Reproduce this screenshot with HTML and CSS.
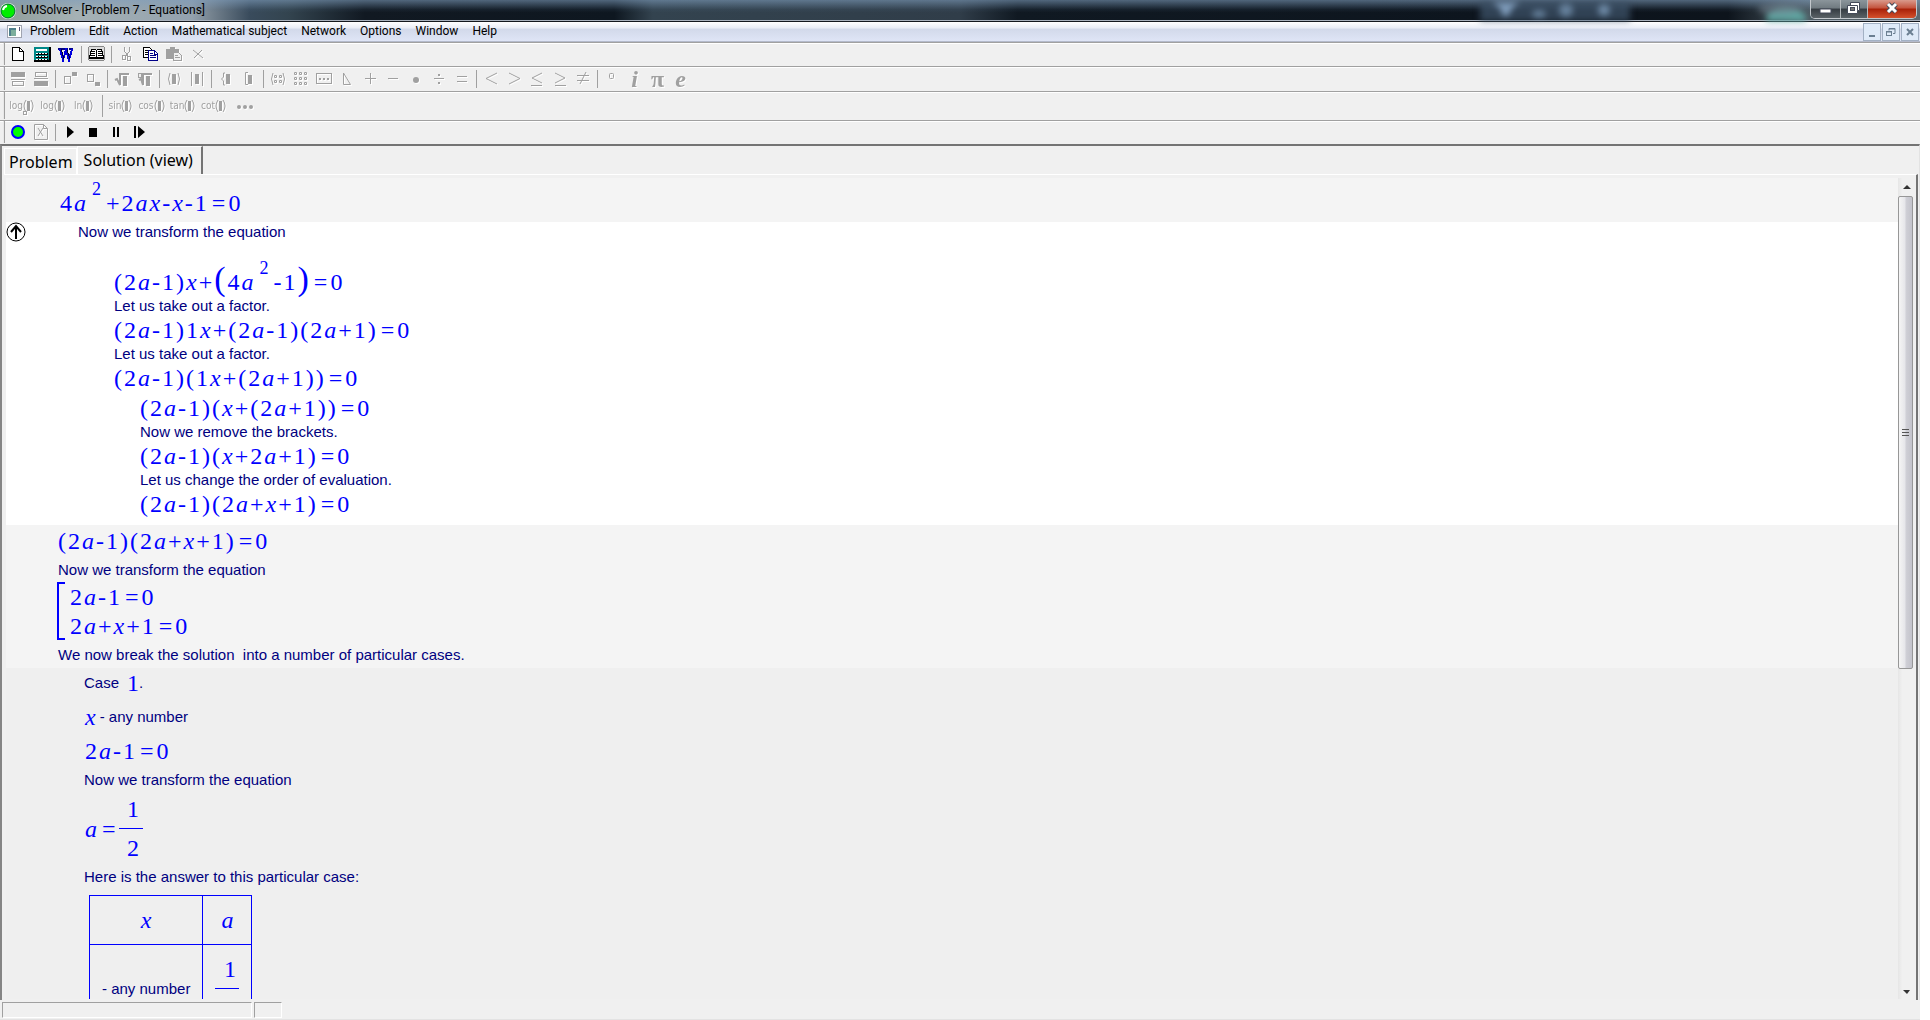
FILE: index.html
```
<!DOCTYPE html>
<html lang="en">
<head>
    <meta charset="UTF-8">
    <meta name="viewport" content="width=device-width, initial-scale=1.0">
    <title>UMSolver - [Problem 7 - Equations]</title>
    <link rel="stylesheet" href="styles.css">
</head>
<body>
    <div class="window">
        <header class="titlebar">
            <svg class="app_icon" width="18" height="18" viewBox="0 0 18 18"><circle cx="8" cy="9" r="8" fill="#e8ffe8"/><circle cx="8" cy="9" r="7" fill="#0e0" stroke="#063" stroke-width="1"/><path d="M3 8a5 5 0 0 1 4-4" stroke="#fff" stroke-width="2" fill="none"/></svg>
            <h1 class="title">UMSolver - [Problem 7 - Equations]</h1>
            <svg class="glass" width="330" height="21" viewBox="0 0 330 21">
                <rect x="0" y="2" width="150" height="19" fill="#40566c" opacity=".7"/>
                <path d="M12 2h28l-7 5-5 9h-5l-3-8z" fill="#7f9cbb"/>
                <ellipse cx="59" cy="14" rx="7" ry="4" fill="#65809b"/><ellipse cx="86" cy="10" rx="7" ry="7" fill="#65809b"/><ellipse cx="124" cy="10" rx="6" ry="6" fill="#6e8aa6"/>
                <ellipse cx="306" cy="19" rx="20" ry="11" fill="#5fa9a4"/><ellipse cx="300" cy="9" rx="22" ry="6" fill="#71808e" opacity=".6"/>
            </svg>
            <div class="window_buttons">
                <button class="win_btn" aria-label="Minimize"><svg width="29" height="18"><rect x="9" y="9" width="11" height="4" fill="#fff" stroke="#444b5a"/></svg></button>
                <button class="win_btn restore" aria-label="Restore"><svg width="26" height="18"><path d="M9.500 2.500h9v8h-2v3h-10v-8h3z" fill="#fff" stroke="#444b5a"/><path d="M9 5.500h7.500v5" fill="none" stroke="#444b5a"/><rect x="9.500" y="7.500" width="4" height="3" fill="#777" stroke="#444b5a"/></svg></button>
                <button class="win_btn close" aria-label="Close"><svg width="48" height="18"><path d="M20 4l8 8M28 4l-8 8" stroke="#444b5a" stroke-width="5"/><path d="M20 4l8 8M28 4l-8 8" stroke="#fff" stroke-width="3"/></svg></button>
            </div>
        </header>

        <nav class="menubar">
            <svg class="doc_icon" width="15" height="13" shape-rendering="crispEdges"><rect width="15" height="13" fill="#a0a4b0"/><rect x="1" y="1" width="13" height="11" fill="#fff"/><rect x="2" y="3" width="7" height="8" fill="#4d7f8c"/><rect x="4" y="5" width="5" height="6" fill="#7cae9c"/><rect x="12" y="2" width="1" height="4" fill="#557"/></svg>
            <button>Problem</button>
            <button>Edit</button>
            <button>Action</button>
            <button>Mathematical subject</button>
            <button>Network</button>
            <button>Options</button>
            <button>Window</button>
            <button>Help</button>
            <div class="mdi_buttons">
                <button class="mdi" aria-label="Minimize document"><svg width="16" height="16"><path d="M5 12h6" stroke="#6b7f92" stroke-width="2"/></svg></button>
                <button class="mdi" aria-label="Restore document"><svg width="16" height="16" fill="none" stroke="#6b7f92"><path d="M6 6.500V4.500h6v5h-2M6 5h6M4 8h5"/><rect x="3.500" y="7.500" width="5" height="4"/></svg></button>
                <button class="mdi" aria-label="Close document"><svg width="16" height="16"><path d="M5 5l6 6M11 5l-6 6" stroke="#6b7f92" stroke-width="2"/></svg></button>
            </div>
        </nav>

        <div class="toolbar main_tools">
            <button class="tool" aria-label="New"><svg width="18" height="16" shape-rendering="crispEdges"><path d="M3.500 1.500h7l4 4v9h-11z" fill="#fff" stroke="#000"/><path d="M10.500 1.500v4h4" fill="none" stroke="#000"/></svg></button>
            <button class="tool" aria-label="Calculator"><svg width="18" height="16" shape-rendering="crispEdges"><rect x="1" y="1" width="17" height="15" fill="#000"/><rect x="1" y="1" width="15" height="13" fill="#088"/><rect x="3" y="3" width="11" height="2" fill="#fff"/><path d="M3 8h12M3 11h12M3 14h12" stroke="#000" stroke-width="2"/><path d="M3 7.500h12M3 10.500h12M3 13.500h12" stroke="#fff" stroke-dasharray="2 1"/></svg></button>
            <button class="tool" aria-label="Word"><svg width="18" height="16" shape-rendering="crispEdges"><path d="M1 3h6M7 3h4M12 3h4" stroke="#008" stroke-width="2"/><path d="M3 3l3 11 3-10 3 10 3-11" fill="none" stroke="#00d" stroke-width="2"/><path d="M4 3l3 10M10 4l3 9" stroke="#003" stroke-width="1"/></svg></button>
            <span class="sep"></span>
            <button class="tool" aria-label="Handbook"><svg width="18" height="16" shape-rendering="crispEdges"><rect x="1.500" y=".5" width="16" height="14" rx="2" fill="#ddd" stroke="#888"/><path d="M4.500 3.500h4l1 1 1-1h4l2 8h-5l-2 1-2-1h-5z" fill="#fff" stroke="#000"/><path d="M5 5.500h3M11 5.500h3M4 7.500h4M11 7.500h4M4 9.500h4M11 9.500h4M9.500 4v9M2 12.500h15" stroke="#000"/></svg></button>
            <span class="sep"></span>
            <button class="tool" disabled aria-label="Cut"><svg width="18" height="16" shape-rendering="crispEdges" fill="none" stroke="#a0a0a0"><path d="M7.500 1v4l4 6M12.500 1v4l-4 6"/><rect x="5.500" y="9.500" width="3" height="4"/><rect x="10.500" y="10.500" width="3" height="4"/></svg></button>
            <button class="tool" aria-label="Copy"><svg width="18" height="16" shape-rendering="crispEdges" fill="#fff"><path d="M2.500 1.500h6l2 2v8h-8z" stroke="#000"/><path d="M4 4.500h3M4 6.500h5M4 8.500h5" stroke="#000"/><path d="M7.500 4.500h6l3 3v7h-9z" stroke="#008"/><path d="M9 7.500h3M9 9.500h6M9 11.500h6M13.500 5v3h3" stroke="#008"/></svg></button>
            <button class="tool" disabled aria-label="Paste"><svg width="18" height="16" shape-rendering="crispEdges"><path d="M1 3h4v-2h5v2h4v10h-13z" fill="#a0a0a0"/><path d="M8.500 6.500h5l3 3v5h-8z" fill="#f0f0f0" stroke="#a0a0a0"/><path d="M10 9.500h3M10 11.500h5M4 4.500h7" stroke="#a0a0a0"/></svg></button>
            <button class="tool" disabled aria-label="Delete"><svg width="18" height="16" stroke="#a0a0a0"><path d="M4 4l10 8M13 4l-8 8" stroke-width="1"/></svg></button>
        </div>

        <div class="toolbar formula_tools">
            <button class="tool" disabled aria-label="Fraction top"><svg width="16" height="16"><path d="M1 1h14v5H1zM1 8h14v1H1z" fill="#a0a0a0"/><rect x="2.500" y="10.500" width="11" height="4" fill="none" stroke="#a0a0a0"/></svg></button>
            <button class="tool" disabled aria-label="Fraction bottom"><svg width="16" height="16"><path d="M1 10h14v5H1zM1 7h14v1H1z" fill="#a0a0a0"/><rect x="2.500" y="1.500" width="11" height="4" fill="none" stroke="#a0a0a0"/></svg></button>
            <span class="sep"></span>
            <button class="tool" disabled aria-label="Power"><svg width="16" height="16"><rect x="2.500" y="5.500" width="6" height="7" fill="none" stroke="#a0a0a0"/><rect x="10" y="1" width="5" height="4" fill="#a0a0a0"/></svg></button>
            <button class="tool" disabled aria-label="Index"><svg width="16" height="16"><rect x="2.500" y="3.500" width="6" height="7" fill="none" stroke="#a0a0a0"/><rect x="10" y="11" width="5" height="4" fill="#a0a0a0"/></svg></button>
            <span class="sep"></span>
            <button class="tool" disabled aria-label="Square root"><svg width="16" height="16"><path d="M1 9l2-1 3 6V3h9" fill="none" stroke="#a0a0a0" stroke-width="2"/><rect x="9" y="5" width="4" height="10" fill="#a0a0a0"/></svg></button>
            <button class="tool" disabled aria-label="Nth root"><svg width="16" height="16"><path d="M2 9l2-1 2 6V3h9" fill="none" stroke="#a0a0a0" stroke-width="2"/><rect x="9" y="5" width="4" height="10" fill="#a0a0a0"/><rect x="1.500" y="2.500" width="3" height="4" fill="#eee" stroke="#a0a0a0"/></svg></button>
            <span class="sep"></span>
            <button class="tool" disabled aria-label="Brackets"><svg width="16" height="16"><path d="M4 2Q1 8 4 14M12 2q3 6 0 12" fill="none" stroke="#a0a0a0"/><rect x="6" y="3" width="4" height="10" fill="#a0a0a0"/></svg></button>
            <button class="tool" disabled aria-label="Modulus"><svg width="16" height="16"><path d="M2.500 1v14M13.500 1v14" fill="none" stroke="#a0a0a0"/><rect x="6" y="3" width="4" height="10" fill="#a0a0a0"/></svg></button>
            <span class="sep"></span>
            <button class="tool" disabled aria-label="System"><svg width="16" height="16"><path d="M7 2H5.500v4l-2 2 2 2v4H7" fill="none" stroke="#a0a0a0"/><rect x="8" y="3" width="4" height="10" fill="#a0a0a0"/></svg></button>
            <button class="tool" disabled aria-label="Set"><svg width="16" height="16"><path d="M7 1.500H4.500v12H7" fill="none" stroke="#a0a0a0"/><rect x="7" y="4" width="4" height="9" fill="#a0a0a0"/></svg></button>
            <span class="sep"></span>
            <button class="tool" disabled aria-label="Matrix"><svg width="16" height="16" fill="none" stroke="#a0a0a0"><path d="M3 2Q0 8 3 14M13 2q3 6 0 12M4.500 4.500h2v2h-2zM9.500 4.500h2v2h-2zM4.500 9.500h2v2h-2zM9.500 9.500h2v2h-2z"/></svg></button>
            <button class="tool" disabled aria-label="Table"><svg width="16" height="16" fill="none" stroke="#a0a0a0"><path d="M1.500 1.500h2v2h-2zM6.500 1.500h2v2h-2zM11.500 1.500h2v2h-2zM1.500 6.500h2v2h-2zM6.500 6.500h2v2h-2zM11.500 6.500h2v2h-2zM1.500 11.500h2v2h-2zM6.500 11.500h2v2h-2zM11.500 11.500h2v2h-2z"/></svg></button>
            <button class="tool" disabled aria-label="Text"><svg width="16" height="16"><rect x=".5" y="2.500" width="15" height="10" fill="none" stroke="#a0a0a0"/><path d="M3 7h2v2H3zM7 7h2v2H7zM11 7h2v2h-2z" fill="#a0a0a0"/></svg></button>
            <button class="tool" disabled aria-label="Triangle"><svg width="16" height="16"><path d="M4.500 2v11.500h7z" fill="none" stroke="#a0a0a0"/></svg></button>
            <button class="tool" disabled aria-label="Plus"><svg width="16" height="16"><path d="M3 7.500h11M8.500 2v11" stroke="#a0a0a0"/></svg></button>
            <button class="tool" disabled aria-label="Minus"><svg width="16" height="16"><path d="M3 7.500h10" stroke="#a0a0a0"/></svg></button>
            <button class="tool" disabled aria-label="Multiply"><svg width="16" height="16"><circle cx="8" cy="9" r="3" fill="#a0a0a0"/></svg></button>
            <button class="tool" disabled aria-label="Divide"><svg width="16" height="16" fill="#a0a0a0"><path d="M3 7h10v1H3zM7 3h2v2H7zM7 11h2v2H7z"/></svg></button>
            <button class="tool" disabled aria-label="Equals"><svg width="16" height="16"><path d="M3 5.500h10M3 10.500h10" stroke="#a0a0a0"/></svg></button>
            <span class="sep"></span>
            <button class="tool" disabled aria-label="Less"><svg width="16" height="16" fill="none" stroke="#a0a0a0"><path d="M14 2L3 7.500 14 13"/></svg></button>
            <button class="tool" disabled aria-label="Greater"><svg width="16" height="16" fill="none" stroke="#a0a0a0"><path d="M3 2l11 5.500L3 13"/></svg></button>
            <button class="tool" disabled aria-label="Less or equal"><svg width="16" height="16" fill="none" stroke="#a0a0a0"><path d="M13 2L3 7l10 5M2 14.500h11"/></svg></button>
            <button class="tool" disabled aria-label="Greater or equal"><svg width="16" height="16" fill="none" stroke="#a0a0a0"><path d="M3 2l10 5-10 5M3 14.500h11"/></svg></button>
            <button class="tool" disabled aria-label="Not equal"><svg width="16" height="16" fill="none" stroke="#a0a0a0"><path d="M2 4.500h12M2 9.500h12M11 1L5 13"/></svg></button>
            <span class="sep"></span>
            <button class="tool" disabled aria-label="Degree"><svg width="16" height="16"><rect x="5.500" y="2.500" width="4" height="5" rx="1" fill="none" stroke="#a0a0a0"/></svg></button>
            <button class="tool letter" disabled><i>i</i></button>
            <button class="tool letter" disabled>π</button>
            <button class="tool letter" disabled><i>e</i></button>
        </div>

        <div class="toolbar function_tools">
            <button class="tool" disabled>log<svg width="11" height="18"><path d="M3 3Q-1 9 3 15M8 3q4 6 0 12" fill="none" stroke="#a0a0a0"/><rect x="4" y="4" width="3" height="10" fill="#a0a0a0"/><rect x=".5" y="14.500" width="3" height="3" fill="none" stroke="#a0a0a0"/></svg></button>
            <button class="tool" disabled>log<svg width="11" height="18"><path d="M3 3Q-1 9 3 15M8 3q4 6 0 12" fill="none" stroke="#a0a0a0"/><rect x="4" y="4" width="3" height="10" fill="#a0a0a0"/></svg></button>
            <button class="tool" disabled>ln<svg width="11" height="18"><path d="M3 3Q-1 9 3 15M8 3q4 6 0 12" fill="none" stroke="#a0a0a0"/><rect x="4" y="4" width="3" height="10" fill="#a0a0a0"/></svg></button>
            <span class="sep"></span>
            <button class="tool" disabled>sin<svg width="11" height="18"><path d="M3 3Q-1 9 3 15M8 3q4 6 0 12" fill="none" stroke="#a0a0a0"/><rect x="4" y="4" width="3" height="10" fill="#a0a0a0"/></svg></button>
            <button class="tool" disabled>cos<svg width="11" height="18"><path d="M3 3Q-1 9 3 15M8 3q4 6 0 12" fill="none" stroke="#a0a0a0"/><rect x="4" y="4" width="3" height="10" fill="#a0a0a0"/></svg></button>
            <button class="tool" disabled>tan<svg width="11" height="18"><path d="M3 3Q-1 9 3 15M8 3q4 6 0 12" fill="none" stroke="#a0a0a0"/><rect x="4" y="4" width="3" height="10" fill="#a0a0a0"/></svg></button>
            <button class="tool" disabled>cot<svg width="11" height="18"><path d="M3 3Q-1 9 3 15M8 3q4 6 0 12" fill="none" stroke="#a0a0a0"/><rect x="4" y="4" width="3" height="10" fill="#a0a0a0"/></svg></button>
            <button class="tool" disabled aria-label="More functions"><svg width="18" height="18" fill="#a0a0a0"><circle cx="3" cy="10" r="2"/><circle cx="9" cy="10" r="2"/><circle cx="15" cy="10" r="2"/></svg></button>
        </div>

        <div class="toolbar run_tools">
            <button class="tool" aria-label="Solve"><svg width="16" height="16"><circle cx="8" cy="8" r="6" fill="#0f0" stroke="#00f" stroke-width="2"/></svg></button>
            <button class="tool" disabled aria-label="Check"><svg width="16" height="16" fill="none" stroke="#a0a0a0"><path d="M1.500 .5h9l4 4v11h-13zM10.500 .5v4h4"/><path d="M5 4l5 8M10 4l-5 8"/></svg></button>
            <span class="sep"></span>
            <button class="tool" aria-label="Play"><svg width="16" height="16"><path d="M5 2v12l7-6z"/></svg></button>
            <button class="tool" aria-label="Stop"><svg width="16" height="16"><path d="M4 4h8v9H4z"/></svg></button>
            <button class="tool" aria-label="Pause"><svg width="16" height="16"><path d="M5 3h2v10H5zM9 3h2v10H9z"/></svg></button>
            <button class="tool" aria-label="Step"><svg width="16" height="16"><path d="M3 2h2v12H3zM7 2v12l7-6z"/></svg></button>
        </div>

        <div class="workspace">
            <div class="tabs" role="tablist">
                <button class="tab" role="tab">Problem</button>
                <button class="tab active" role="tab">Solution (view)</button>
            </div>
            <div class="page">
                <main class="solution">
                    <section class="band start">
                        <p class="eq"><b>4</b><i>a</i><sup>2</sup><b>+</b><b>2</b><i>a</i><i>x</i><b>-</b><i>x</i><b>-</b><b>1</b><b class="equals">=</b><b>0</b></p>
                    </section>
                    <section class="band expanded">
                        <button class="collapse" aria-label="Collapse"><svg width="20" height="20" fill="none" stroke="#000"><circle cx="10" cy="10" r="9"/><path d="M10 17V4M5 10l5-6 5 6" stroke-width="2"/></svg></button>
                        <div class="steps">
                            <p class="note">Now we transform the equation</p>
                            <div class="inner">
                                <p class="eq"><b>(</b><b>2</b><i>a</i><b>-</b><b>1</b><b>)</b><i>x</i><b>+</b><b class="big">(</b><b>4</b><i>a</i><sup>2</sup><b>-</b><b>1</b><b class="big">)</b><b class="equals">=</b><b>0</b></p>
                                <p class="note">Let us take out a factor.</p>
                                <p class="eq"><b>(</b><b>2</b><i>a</i><b>-</b><b>1</b><b>)</b><b>1</b><i>x</i><b>+</b><b>(</b><b>2</b><i>a</i><b>-</b><b>1</b><b>)</b><b>(</b><b>2</b><i>a</i><b>+</b><b>1</b><b>)</b><b class="equals">=</b><b>0</b></p>
                                <p class="note">Let us take out a factor.</p>
                                <p class="eq"><b>(</b><b>2</b><i>a</i><b>-</b><b>1</b><b>)</b><b>(</b><b>1</b><i>x</i><b>+</b><b>(</b><b>2</b><i>a</i><b>+</b><b>1</b><b>)</b><b>)</b><b class="equals">=</b><b>0</b></p>
                                <div class="detail">
                                    <p class="eq"><b>(</b><b>2</b><i>a</i><b>-</b><b>1</b><b>)</b><b>(</b><i>x</i><b>+</b><b>(</b><b>2</b><i>a</i><b>+</b><b>1</b><b>)</b><b>)</b><b class="equals">=</b><b>0</b></p>
                                    <p class="note">Now we remove the brackets.</p>
                                    <p class="eq"><b>(</b><b>2</b><i>a</i><b>-</b><b>1</b><b>)</b><b>(</b><i>x</i><b>+</b><b>2</b><i>a</i><b>+</b><b>1</b><b>)</b><b class="equals">=</b><b>0</b></p>
                                    <p class="note">Let us change the order of evaluation.</p>
                                    <p class="eq"><b>(</b><b>2</b><i>a</i><b>-</b><b>1</b><b>)</b><b>(</b><b>2</b><i>a</i><b>+</b><i>x</i><b>+</b><b>1</b><b>)</b><b class="equals">=</b><b>0</b></p>
                                </div>
                            </div>
                        </div>
                    </section>
                    <section class="band result">
                        <p class="eq"><b>(</b><b>2</b><i>a</i><b>-</b><b>1</b><b>)</b><b>(</b><b>2</b><i>a</i><b>+</b><i>x</i><b>+</b><b>1</b><b>)</b><b class="equals">=</b><b>0</b></p>
                        <p class="note spaced">Now we transform the equation</p>
                        <div class="system">
                            <svg class="bracket" width="9" height="58" viewBox="0 0 9 58"><path d="M8 1H1v56h7" fill="none" stroke="#00f" stroke-width="2"/></svg>
                            <div class="cases">
                                <p class="eq"><b>2</b><i>a</i><b>-</b><b>1</b><b class="equals">=</b><b>0</b></p>
                                <p class="eq"><b>2</b><i>a</i><b>+</b><i>x</i><b>+</b><b>1</b><b class="equals">=</b><b>0</b></p>
                            </div>
                        </div>
                        <p class="note spaced">We now break the solution&nbsp; into a number of particular cases.</p>
                    </section>
                    <section class="band case">
                        <p class="mixed"><span class="note">Case</span> <span class="eq number">1</span><span class="note">.</span></p>
                        <p class="mixed roomy"><span class="eq"><i>x</i></span> <span class="note">- any number</span></p>
                        <p class="eq roomy"><b>2</b><i>a</i><b>-</b><b>1</b><b class="equals">=</b><b>0</b></p>
                        <p class="note spaced">Now we transform the equation</p>
                        <p class="eq assign spaced"><i>a</i><b class="equals">=</b><span class="fraction"><span>1</span><span>2</span></span></p>
                        <p class="note spaced">Here is the answer to this particular case:</p>
                        <table class="answer">
                            <tr>
                                <th><i>x</i></th>
                                <th><i>a</i></th>
                            </tr>
                            <tr>
                                <td><span class="note">- any number</span></td>
                                <td><span class="fraction"><span>1</span><span>2</span></span></td>
                            </tr>
                        </table>
                    </section>
                </main>
                <div class="scrollbar">
                    <svg class="arrow" width="16" height="18"><path d="M5 11l4-4 4 4z" fill="#333"/></svg>
                    <div class="thumb"><span></span><span></span><span></span></div>
                    <div class="track"></div>
                    <svg class="arrow" width="16" height="18"><path d="M5 9h7l-3 4z" fill="#333"/></svg>
                </div>
            </div>
        </div>

        <footer class="statusbar">
            <div class="status_main"></div>
            <div class="status_side"></div>
        </footer>
    </div>
</body>
</html>
```
FILE: styles.css
```
* {
    margin: 0;
    padding: 0;
    box-sizing: border-box;
}
body {
    height: 100vh;
    background-color: #fff;
    font-family: Roboto, 'Open Sans', sans-serif;
    overflow: hidden;
}
button {
    border: none;
    background: none;
    font-family: inherit;
    color: inherit;
}
svg {
    display: block;
    flex: none;
}
.window {
    display: flex;
    flex-direction: column;
    height: 100vh;
    margin-right: 10px;
    background-color: #f0f0f0;
}

/* title bar */
.titlebar {
    display: flex;
    height: 22px;
    flex: none;
    padding-right: 3px;
    border-bottom: 1px solid #14181e;
    box-shadow: inset 0 -1px #aab2bd;
    background: linear-gradient(rgba(125, 155, 185, 0.6), rgba(90, 120, 150, 0.1) 45%, transparent 60%),
        linear-gradient(90deg, #8f9d99, #a5b2b5 4%, #93a1ae 10%, #75838f 11%, #394b5c 13%, #33444f 15%, #111922 19%, #0e1720 32%, #33434f 34%, #303d49 50%, #101922 53%, #0d151e 77%, #0d141c 90%, #4c5961 94%, #5c6a72);
}
.app_icon {
    margin-top: 2px;
}
.title {
    margin-left: 3px;
    font-size: 12px;
    line-height: 21px;
    font-weight: normal;
    color: #000;
    white-space: nowrap;
}
.glass {
    margin-left: auto;
    filter: blur(3px);
}
.window_buttons {
    display: flex;
    height: 19px;
    border: 1px solid #c3c8cd;
    border-top: none;
    border-radius: 0 0 5px 5px;
    overflow: hidden;
}
.win_btn {
    background: linear-gradient(#8b959b, #707a80 45%, #353c42 50%, #5a6267);
    border-right: 1px solid #b5babd;
}
.win_btn.close {
    border-right: none;
    background: linear-gradient(#d99a8c, #c3523c 45%, #a82008 50%, #d4512c);
}

/* menu */
.menubar {
    display: flex;
    align-items: center;
    height: 20px;
    flex: none;
    padding-left: 7px;
    padding-right: 1px;
    border-bottom: 1px solid #b4bacb;
    background: linear-gradient(#fff, #e8ecf6 33%, #d2d9ea 36%, #dfe5f6);
    font-size: 12px;
}
.doc_icon {
    margin-right: 1px;
}
.menubar button {
    height: 19px;
    padding: 0 7px;
    font-size: 12px;
    line-height: 19px;
    white-space: nowrap;
}
.mdi_buttons {
    display: flex;
    gap: 1px;
    margin-left: auto;
}
.menubar .mdi {
    height: 18px;
    padding: 0;
    border: 1px solid #a3b1c4;
    background-color: #dfeaf8;
}

/* toolbars */
.toolbar {
    display: flex;
    align-items: center;
    flex: none;
    height: 25px;
    padding-left: 3px;
    padding-bottom: 1px;
    border-top: 1px solid #a0a0a0;
    box-shadow: inset 0 1px #fff;
}
.toolbar::before {
    content: "";
    align-self: stretch;
    margin-right: 1px;
    border-left: 1px solid #e8e8e8;
    border-right: 1px solid #a0a0a0;
}
.main_tools {
    height: 24px;
}
.function_tools {
    height: 29px;
}
.run_tools {
    height: 24px;
}
.tool {
    display: flex;
    align-items: center;
    justify-content: center;
    width: 23px;
    height: 20px;
    font-size: 11px;
    color: #a0a0a0;
}
.tool:disabled {
    filter: drop-shadow(1px 1px 0 #fff);
}
.main_tools .tool {
    width: 24px;
}
.function_tools .tool {
    width: 31px;
    font-family: 'DejaVu Sans Condensed', 'Open Sans', sans-serif;
    font-size: 10px;
}
.tool.letter {
    font-family: 'Liberation Serif', serif;
    font-size: 24px;
    font-weight: bold;
    line-height: 20px;
}
.sep {
    align-self: stretch;
    width: 1px;
    margin: 3px 2px 2px 3px;
    background-color: #a0a0a0;
}

/* workspace and tabs */
.workspace {
    display: flex;
    flex-direction: column;
    flex: 1;
    min-height: 0;
    padding: 0 1px 0 2px;
    border-top: 2px solid #747474;
    border-left: 2px solid #858585;
    border-right: 1px solid #e3e3e3;
}
.tabs {
    display: flex;
    align-items: flex-end;
    flex: none;
    height: 28px;
}
.tab {
    height: 26px;
    padding: 0 3px 0 4px;
    border: 1px solid #fff;
    border-bottom: none;
    font-family: 'Noto Sans', sans-serif;
    font-size: 16px;
    line-height: 26px;
    white-space: nowrap;
}
.tab.active {
    height: 28px;
    padding: 0 8px 2px 6px;
    border-right: 2px solid #747474;
}
.page {
    display: flex;
    flex: 1;
    min-height: 0;
    padding: 3px 3px 1px 2px;
    border-top: 1px solid #fff;
    border-right: 2px solid #747474;
}

/* solution */
.solution {
    flex: 1;
    overflow: hidden;
    font-family: 'Liberation Sans', Arial, sans-serif;
    background-color: #efefef;
}
.band {
    padding-left: 52px;
    background-color: #f4f4f4;
}
.band.start {
    padding: 11px 0 5px 54px;
}
.band.expanded {
    display: flex;
    padding: 0 0 7px 0;
    background-color: #fff;
}
.band.result {
    padding-top: 2px;
    padding-bottom: 3px;
}
.band.case {
    padding-top: 1px;
    padding-left: 78px;
    background-color: #efefef;
}
.collapse {
    align-self: flex-start;
}
.steps {
    padding-left: 52px;
}
.inner {
    padding-top: 26px;
    padding-left: 36px;
}
.detail {
    padding-top: 2px;
    padding-left: 26px;
}
.note {
    font-size: 15px;
    line-height: 20px;
    color: #000080;
}
.eq {
    display: flex;
    align-items: baseline;
    gap: 2px;
    height: 28px;
    font-family: 'Liberation Serif', 'Times New Roman', serif;
    font-size: 24px;
    line-height: 28px;
    color: #0000ff;
}
.eq b {
    font-weight: normal;
}
.eq .equals {
    margin-left: 3px;
    margin-right: 1px;
}
.eq sup {
    align-self: flex-end;
    margin-left: 4px;
    padding-right: 3px;
    padding-bottom: 18px;
    font-size: 18px;
    line-height: 20px;
}
.eq .big {
    font-size: 34px;
    line-height: 20px;
}
.spaced {
    margin-top: 5px;
}
.roomy {
    margin-top: 6px;
}
.mixed {
    display: flex;
    align-items: center;
}
.mixed.roomy {
    gap: 4px;
}
.mixed .number {
    margin-left: 7px;
}
.band.case .eq {
    padding-left: 1px;
}
.system {
    display: flex;
    gap: 4px;
    margin-top: 2px;
    margin-left: -1px;
}
.cases {
    display: flex;
    flex-direction: column;
    gap: 1px;
    padding-top: 1px;
}
.eq.assign {
    align-items: center;
    height: auto;
}
.fraction {
    display: inline-flex;
    flex-direction: column;
    width: 24px;
    font-family: 'Liberation Serif', 'Times New Roman', serif;
    font-size: 24px;
    line-height: 28px;
    text-align: center;
    color: #0000ff;
}
.fraction span {
    padding-left: 5px;
}
.fraction span:first-child {
    padding-bottom: 5px;
    border-bottom: 1px solid #0000ff;
}
.fraction span:last-child {
    padding-top: 5px;
}
.answer {
    margin-top: 8px;
    margin-left: 5px;
    border-collapse: collapse;
}
.answer th,
.answer td {
    padding: 10px 12px;
    border: 1px solid #0000ff;
    text-align: center;
    vertical-align: middle;
}
.answer th {
    font-family: 'Liberation Serif', 'Times New Roman', serif;
    font-size: 24px;
    line-height: 28px;
    font-weight: normal;
    color: #0000ff;
}

/* scroll bar */
.scrollbar {
    display: flex;
    flex-direction: column;
    flex: none;
    width: 15px;
    background: linear-gradient(90deg, #e6e6e6, #f0f0f0 30%, #f0f0f0);
}
.thumb {
    display: flex;
    flex-direction: column;
    align-items: center;
    justify-content: center;
    gap: 2px;
    flex: 472;
    border: 1px solid #979797;
    border-radius: 2px;
    background: linear-gradient(90deg, #f5f5f5, #e6e6ea 45%, #cfcfd6 55%, #c3c3cb);
}
.thumb span {
    width: 7px;
    height: 1px;
    background-color: #555;
}
.track {
    flex: 312;
}

/* status bar */
.statusbar {
    display: flex;
    gap: 2px;
    flex: none;
    height: 20px;
    padding: 2px 0 1px 2px;
    border-bottom: 1px solid #e3e3e3;
}
.statusbar div {
    border: 1px solid #a0a0a0;
    border-right-color: #fff;
    border-bottom-color: #fff;
}
.status_main {
    width: 250px;
}
.status_side {
    width: 28px;
}
```
